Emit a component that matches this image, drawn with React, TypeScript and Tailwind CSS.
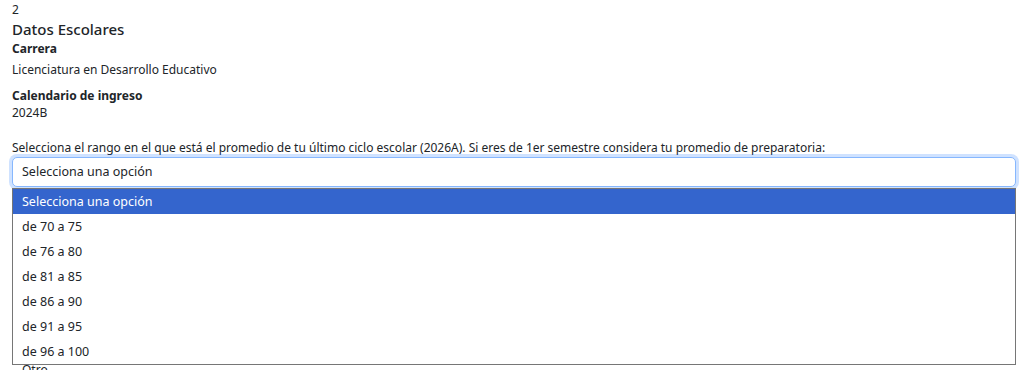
import React from "react";

const options = [
  "de 70 a 75",
  "de 76 a 80",
  "de 81 a 85",
  "de 86 a 90",
  "de 91 a 95",
  "de 96 a 100",
];

export default function App() {
  return (
    <div
      className="w-[1027px] h-[370px] overflow-hidden bg-white text-[#212529] text-[12px] leading-[18px]"
      style={{ fontFamily: '"Noto Sans", "Open Sans", sans-serif' }}
    >
      <div className="pl-[12px] pr-[11px] pt-[2px]">
        <div className="leading-[16px]">2</div>
        <div className="text-[15px] leading-[22px] font-medium">Datos Escolares</div>
        <div className="font-bold leading-[18px]">Carrera</div>
        <div className="mt-[3px]">Licenciatura en Desarrollo Educativo</div>
        <div className="font-bold mt-[8px]">Calendario de ingreso</div>
        <div className="mt-[-1px]">2024B</div>
        <div className="mt-[17px]">
          Selecciona el rango en el que está el promedio de tu último ciclo escolar (2026A). Si eres de 1er semestre considera tu promedio de preparatoria:
        </div>
        <div className="relative">
          <div className="h-[30px] rounded-[5px] border border-[#86b7fe] shadow-[0_0_0_3px_rgba(13,110,253,0.2)] bg-white flex items-center pl-[9px] text-[12.5px]">
            Selecciona una opción
          </div>
          <div className="absolute left-0 right-0 top-[31px] z-10 bg-white border border-[#767676] text-[12.5px]">
            <div className="h-[25px] flex items-center pl-[9px] bg-[#3465cd] text-white">
              Selecciona una opción
            </div>
            {options.map((o) => (
              <div key={o} className="h-[25px] flex items-center pl-[9px]">
                {o}
              </div>
            ))}
          </div>
          <div className="mt-[174px] pl-[10px]">Otro</div>
        </div>
      </div>
    </div>
  );
}
